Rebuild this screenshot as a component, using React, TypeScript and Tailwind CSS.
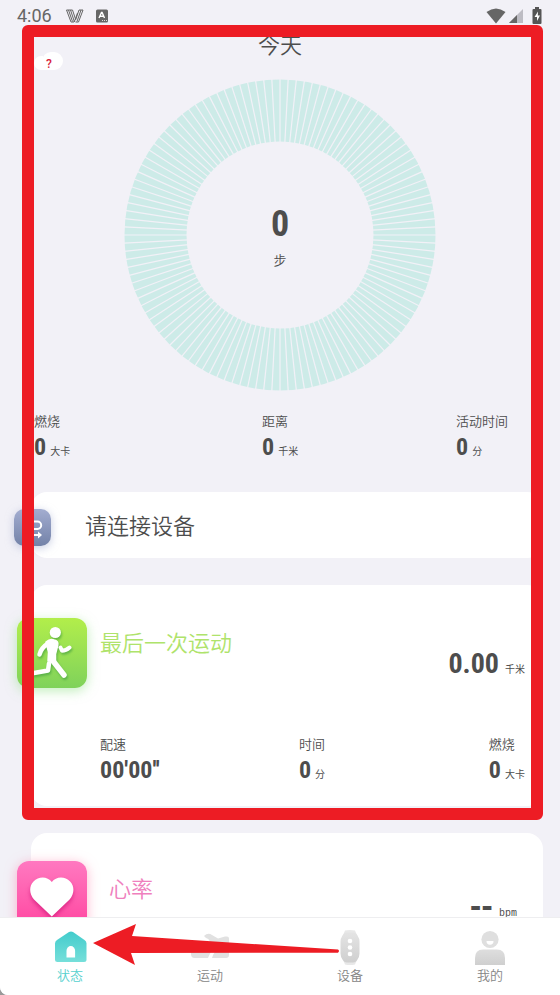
import React from 'react';
import { clsx } from 'clsx';

const rays = Array.from({ length: 120 }, (_, i) => i * 3);

const todayStats = [
  { label: '燃烧', value: '0', unit: '大卡' },
  { label: '距离', value: '0', unit: '千米' },
  { label: '活动时间', value: '0', unit: '分' },
];

const tabs = [
  { name: '状态', href: '#status', icon: HomeIcon, active: true },
  { name: '运动', href: '#sport', icon: ShoeIcon, active: false },
  { name: '设备', href: '#device', icon: WatchIcon, active: false },
  { name: '我的', href: '#me', icon: PersonIcon, active: false },
];

function HomeIcon() {
  return (
    <svg width="36" height="35" viewBox="0 0 36 35">
      <defs>
        <linearGradient id="home" x1="0" y1="0" x2="0" y2="1">
          <stop offset="0" stopColor="#42cccc" />
          <stop offset="1" stopColor="#76dfda" />
        </linearGradient>
      </defs>
      <path
        fill="url(#home)"
        d="M17 2q2-1 4 0l11.500 8q2 1.400 2 3.600V29.500q0 2.500-2.500 2.500H5.500q-2.500 0-2.500-2.500V13.600q0-2.200 2-3.600z"
      />
      <path fill="#fff" d="M14.500 27.500V21a4.300 5 0 0 1 8.600 0v6.500z" />
    </svg>
  );
}

function ShoeIcon() {
  return (
    <svg width="38" height="35" viewBox="0 0 38 35">
      <path
        fill="#e1e1e1"
        d="M0 17h25q-5 3-8 11H3.500Q0 28 0 24zM38 17h-9q-6 4-8 11h14q3 0 3-3z"
      />
      <path fill="#e1e1e1" d="M13 6q4-4 8-1l6 3.500L34 6.500h2q2 0 2 2V18H19v-5q0-4-4-5z" />
    </svg>
  );
}

function WatchIcon() {
  return (
    <svg width="20" height="35" viewBox="0 0 20 35">
      <defs>
        <linearGradient id="watch" x1="0" y1="0" x2="0" y2="1">
          <stop offset="0" stopColor="#e4e4e4" />
          <stop offset="1" stopColor="#cfcfcf" />
        </linearGradient>
      </defs>
      <path fill="#e8e8e8" d="M5 .5q5-1 10 0l2.500 6v22l-2.500 6q-5 1-10 0l-2.500-6v-22z" />
      <path
        fill="url(#watch)"
        d="M7 2.500h6q3 0 4.500 3 2 3 2 6v12q0 3-2 6-1.500 3-4.500 3H7q-3 0-4.500-3-2-3-2-6v-12q0-3 2-6 1.500-3 4.500-3z"
      />
      <circle cx="10" cy="11" r="2.300" fill="#fff" />
      <circle cx="10" cy="17.500" r="2.300" fill="#fff" />
      <circle cx="10" cy="24" r="2.300" fill="#fff" />
    </svg>
  );
}

function PersonIcon() {
  return (
    <svg width="32" height="35" viewBox="0 0 32 35">
      <defs>
        <linearGradient id="person" x1="0" y1="0" x2="0" y2="1">
          <stop offset="0" stopColor="#dedede" />
          <stop offset="1" stopColor="#cfcfcf" />
        </linearGradient>
      </defs>
      <circle cx="16" cy="9.500" r="8.600" fill="#dfdfdf" />
      <path fill="#fff" d="M12.500 11h7a3.500 3.800 0 0 1-7 0z" />
      <path fill="url(#person)" d="M1 35v-7q0-8.500 8-8.500h14q8 0 8 8.500v7z" />
    </svg>
  );
}

function StatusBar() {
  return (
    <header className="flex h-[25px] shrink-0 items-center pt-[6px] pr-[18px] pl-[17px] text-[#666]">
      <span className="font-['Roboto'] text-lg">4:06</span>
      <svg className="ml-[14px]" width="18" height="14" viewBox="0 0 18 14" fill="none" stroke="#666" strokeWidth="1">
        <path d="M.5 1h6l3 9 2-6M.5 1l4.500 12h3l1.500-3M2.500 1l4 11.500M4.500 1 8.500 13M17 1h-4l-3.500 10M17 1l-4.500 12h-3M15 1l-4 11.500" />
      </svg>
      <svg className="ml-3" width="12" height="14" viewBox="0 0 12 14">
        <rect y=".5" width="12" height="13" rx="1.500" fill="#666" />
        <path d="M3 9 5.500 3.500h.6L8.500 9M4 7.300h4" fill="none" stroke="#fff" strokeWidth="1.400" />
        <path d="M6 11.500h1m1 0h1m1 0h1" stroke="#ddd" strokeWidth="1" />
      </svg>
      <svg className="ml-auto" width="20" height="16" viewBox="0 0 20 16">
        <path d="M.5 4Q10-3 19.500 4L10 15.500z" fill="#666" />
      </svg>
      <svg className="ml-[3px]" width="14" height="14" viewBox="0 0 14 14">
        <path d="M14 0v14H0z" fill="#bdbcc3" />
        <path d="M8 6v8H0z" fill="#666" />
      </svg>
      <svg className="ml-[9px]" width="10" height="17" viewBox="0 0 10 17">
        <path d="M3 0h4v2h1.500q1 0 1 1v13q0 1-1 1h-7q-1 0-1-1V3q0-1 1-1H3z" fill="#555" />
        <path d="M6 4.500 2.500 10H5v4l3-5.500H5.800z" fill="#fff" />
      </svg>
    </header>
  );
}

function Stat({ label, value, unit }: { label: string; value: string; unit?: string }) {
  return (
    <div className="whitespace-nowrap">
      <p className="text-[13px] leading-5 font-[350]">{label}</p>
      <p className="flex h-8 items-baseline gap-1">
        <span className="font-['Roboto_Condensed',sans-serif] text-2xl leading-8 font-bold">{value}</span>
        {unit && <span className="text-[10px]">{unit}</span>}
      </p>
    </div>
  );
}

function StepRing() {
  return (
    <div className="mx-auto mt-[9px] grid w-[312px] place-items-center">
      <svg className="col-start-1 row-start-1" width="312" height="312" viewBox="-156 -156 312 312">
        <circle r="124.500" fill="none" stroke="#cdebe8" strokeWidth="62" />
        {rays.map((angle) => (
          <path key={angle} d="M0-92V-157" stroke="#f2f1f7" strokeWidth="1.200" transform={`rotate(${angle})`} />
        ))}
      </svg>
      <div className="col-start-1 row-start-1 text-center">
        <p className="font-['Roboto_Condensed',sans-serif] text-4xl leading-12 font-bold">0</p>
        <p className="mt-[2px] text-[13px] leading-5 font-[350]">步</p>
      </div>
    </div>
  );
}

function DeviceCard() {
  return (
    <section className="mt-[29px] ml-[9px] flex h-[66px] items-center rounded-2xl bg-white">
      <div className="mt-1 -ml-[17px] size-[37px] rounded-[10px] bg-linear-to-b from-[#a3add0] to-[#7382a8] shadow-[0_2px_8px_#a3add099]">
        <svg width="37" height="37" viewBox="0 0 37 37" fill="none" stroke="#fff" strokeWidth="2">
          <path d="M12 12.500h11.500a3.700 3.700 0 0 1 0 7.400H13a3 3 0 0 0 0 6h12" />
          <path d="m24 22.500 4 3.500-4 3.500z" fill="#fff" stroke="none" />
        </svg>
      </div>
      <h2 className="mb-[2px] ml-[34px] text-[22px] font-[350]">请连接设备</h2>
    </section>
  );
}

function WorkoutCard() {
  return (
    <section className="mt-[27px] ml-[9px] h-[221px] rounded-2xl bg-white pt-[33px] pr-[18px]">
      <div className="flex">
        <div className="-ml-[14px] size-[70px] shrink-0 rounded-xl bg-linear-to-b from-[#b2ee4a] to-[#7fd25a] shadow-[0_3px_12px_#8be08088]">
          <svg
            className="drop-shadow-[1px_2px_1px_#3f9b3fa0]"
            width="70"
            height="70"
            viewBox="0 0 70 70"
            fill="none"
            stroke="#fff"
            strokeLinecap="round"
            strokeLinejoin="round"
          >
            <circle cx="38.300" cy="14.500" r="5.600" fill="#fff" stroke="none" />
            <path d="M31 25.500Q24 30 22.500 36.500" strokeWidth="4.500" />
            <path d="M29 24q4-3.500 8-2 4.500 1 3.800 5L38.500 36v7.500L31 43l.500-9z" fill="#fff" strokeWidth="1.500" />
            <path d="m43.500 29.500 1.500 3.200q4 0 7.500-3.200" strokeWidth="4" />
            <path d="m34.500 41 12.500 16" strokeWidth="5.500" />
            <path d="m32 45.500-1 7-14 2.500" strokeWidth="4.500" />
          </svg>
        </div>
        <h2 className="mt-[7px] ml-[13px] text-[22px] font-[350] text-[#afe36b]">最后一次运动</h2>
        <p className="mt-[26px] ml-auto flex h-10 items-baseline gap-[6px]">
          <span className="font-['Roboto_Condensed',sans-serif] text-[28px] leading-10 font-bold">0.00</span>
          <span className="text-[10px]">千米</span>
        </p>
      </div>
      <div className="mt-[46px] grid grid-cols-[200fr_191fr_36fr] pl-[69px]">
        <Stat label="配速" value={"00'00''"} />
        <Stat label="时间" value="0" unit="分" />
        <Stat label="燃烧" value="0" unit="大卡" />
      </div>
    </section>
  );
}

function HeartCard() {
  return (
    <section className="mt-[13px] mr-[17px] ml-[31px] flex h-[170px] rounded-2xl bg-white pt-7 pr-[26px]">
      <div className="-ml-[14px] size-[70px] shrink-0 rounded-xl bg-linear-to-b from-[#ff78c0] to-[#ff409f] shadow-[0_2px_12px_#ff78a588]">
        <svg className="drop-shadow-[0_3px_2px_#c4086d90]" width="70" height="70" viewBox="0 0 70 70">
          <path
            fill="#fff"
            d="M34.800 55.500 17 38.500C12 33 12 25 16.500 20.500c5-5.500 14-5.500 18.300.5 4.300-6 13.300-6 18.300-.5 4.500 4.500 4.500 12.500-.5 18z"
          />
        </svg>
      </div>
      <h2 className="mt-[10px] ml-[22px] text-[22px] font-[350] text-[#ef7fbe]">心率</h2>
      <p className="mt-[30px] ml-auto flex h-8 items-baseline gap-[6px]">
        <span className="font-['DejaVu_Sans'] text-[28px] leading-8 font-bold">--</span>
        <span className="font-['Liberation_Mono'] text-[10px]">bpm</span>
      </p>
    </section>
  );
}

function TabBar() {
  return (
    <nav className="relative grid h-[78px] shrink-0 grid-cols-4 border-t border-[#eeeef0] bg-white pt-3">
      {tabs.map((tab) => (
        <a
          key={tab.name}
          href={tab.href}
          className={clsx(
            'flex flex-col items-center text-[13px] leading-5 font-[350]',
            tab.active ? 'text-[#55d0ce]' : 'text-[#858585]'
          )}
        >
          <tab.icon />
          {tab.name}
        </a>
      ))}
      {/* Arrow pointing at the first tab */}
      <svg className="absolute top-[6px] left-[93px]" width="248" height="42" viewBox="0 0 248 42">
        <path fill="#ed1c24" d="M0 19 43 0l-4 12 206 13.500q2 1.500 0 3.200L38 29l4 12z" />
      </svg>
    </nav>
  );
}

export default function App() {
  return (
    <div className="h-screen bg-[#999]">
      <div className="flex h-full flex-col overflow-hidden rounded-bl-lg bg-[#f2f1f7] font-['Noto_Sans_CJK_SC',sans-serif] text-[#4d4d4d]">
        <StatusBar />
        <main className="min-h-0 flex-1 overflow-hidden">
          <div className="relative mr-[17px] ml-[22px] pb-[14px]">
            <div className="pr-[17px] pl-3">
              <div className="grid h-[45px] grid-cols-[1fr_auto_1fr]">
                <button
                  aria-label="帮助"
                  className="flex h-[18px] w-[29px] items-end self-end font-['Roboto'] text-xs font-medium text-[#d81f3c]"
                >
                  <span className="h-[14px] w-[9px] rounded-l-lg bg-white" />
                  <span className="-ml-px flex h-[18px] w-[21px] items-center rounded-r-[9px] rounded-tl-[9px] bg-white pt-[6px] pl-1">
                    ?
                  </span>
                </button>
                <h1 className="pt-[2px] text-[22px] leading-8 font-[350]">今天</h1>
              </div>
              <StepRing />
              <div className="mt-5 grid grid-cols-[228fr_194fr_70fr]">
                {todayStats.map((stat) => (
                  <Stat key={stat.label} {...stat} />
                ))}
              </div>
            </div>
            <DeviceCard />
            <WorkoutCard />
            {/* Highlight frame */}
            <div className="pointer-events-none absolute inset-0 rounded-md border-12 border-[#ed1c24]" />
          </div>
          <HeartCard />
        </main>
        <TabBar />
      </div>
    </div>
  );
}
